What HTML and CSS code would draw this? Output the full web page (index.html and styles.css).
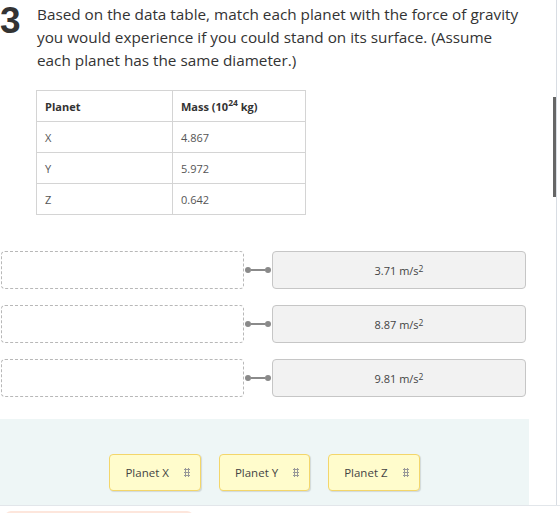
FILE: index.html
```html
<!DOCTYPE html>
<html lang="en">
<head>
    <meta charset="UTF-8">
    <title>Question 3 - Planet gravity</title>
    <link rel="stylesheet" href="styles.css">
</head>
<body>
    <div class="page">
        <div class="question">
            <div class="number">3</div>
            <p class="prompt">Based on the data table, match each planet with the force of gravity you would experience if you could stand on its surface. (Assume each planet has the same diameter.)</p>
        </div>

        <table class="data">
            <tr>
                <th>Planet</th>
                <th>Mass (10<sup>24</sup> kg)</th>
            </tr>
            <tr><td>X</td><td>4.867</td></tr>
            <tr><td>Y</td><td>5.972</td></tr>
            <tr><td>Z</td><td>0.642</td></tr>
        </table>

        <div class="matches">
            <div class="match-row">
                <div class="drop"></div>
                <div class="link"><span class="dot"></span><span class="bar"></span><span class="dot"></span></div>
                <div class="answer">3.71 m/s<sup>2</sup></div>
            </div>
            <div class="match-row">
                <div class="drop"></div>
                <div class="link"><span class="dot"></span><span class="bar"></span><span class="dot"></span></div>
                <div class="answer">8.87 m/s<sup>2</sup></div>
            </div>
            <div class="match-row">
                <div class="drop"></div>
                <div class="link"><span class="dot"></span><span class="bar"></span><span class="dot"></span></div>
                <div class="answer">9.81 m/s<sup>2</sup></div>
            </div>
        </div>

        <div class="bank">
            <div class="chip">Planet X <span class="grip"></span></div>
            <div class="chip">Planet Y <span class="grip"></span></div>
            <div class="chip">Planet Z <span class="grip"></span></div>
        </div>

        <div class="scroll-thumb"></div>
    </div>
    <div class="footer">
        <div class="feedback"></div>
    </div>
</body>
</html>
```

FILE: styles.css
```css
body {
    margin: 0;
    font-family: "Open Sans", sans-serif;
    color: #333;
    background: white;
}
.page {
    position: relative;
    width: 557px;
    height: 505px;
    border-right: 1px solid #d8dde3;
    box-sizing: border-box;
}
.question {
    display: flex;
    padding-top: 3px;
}
.number {
    width: 37px;
    font-family: "Liberation Sans", Arial, sans-serif;
    font-size: 37px;
    font-weight: bold;
    line-height: 41px;
    color: #333;
    margin-top: -3px;
    box-sizing: border-box;
}
.prompt {
    margin: 0;
    width: 492px;
    font-size: 15.3px;
    line-height: 23px;
    color: #333;
}
.data {
    margin: 18px 0 0 36px;
    border-collapse: collapse;
    font-size: 11px;
    color: #555;
}
.data th, .data td {
    border: 1px solid #d4d4d4;
    height: 31px;
    padding: 0 8px;
    text-align: left;
    box-sizing: border-box;
}
.data th {
    font-weight: bold;
    color: #333;
}
.data th:first-child {
    width: 136px;
}
.data th:last-child {
    width: 133px;
}
.data sup {
    font-size: 8.5px;
    line-height: 0;
}
.matches {
    margin-top: 36px;
    padding-left: 1px;
    display: flex;
    flex-direction: column;
    gap: 16px;
}
.match-row {
    display: flex;
    align-items: center;
    height: 38px;
}
.drop {
    width: 243px;
    height: 38px;
    border: 1px dashed #b8b8b8;
    border-radius: 4px;
    box-sizing: border-box;
}
.link {
    display: flex;
    align-items: center;
    width: 28px;
    padding-left: 1px;
    box-sizing: border-box;
}
.dot {
    width: 6px;
    height: 6px;
    border-radius: 50%;
    background: #8a8a8a;
}
.bar {
    width: 14px;
    height: 2px;
    background: #8a8a8a;
}
.answer {
    width: 254px;
    height: 38px;
    display: flex;
    align-items: center;
    justify-content: center;
    background: #f2f2f2;
    border: 1px solid #c6c6c6;
    border-radius: 4px;
    box-sizing: border-box;
    font-size: 11px;
    color: #444;
}
.answer sup {
    font-size: 8.5px;
    line-height: 0;
    position: relative;
    top: -1px;
}
.bank {
    position: absolute;
    left: 0;
    bottom: 0;
    width: 529px;
    height: 86px;
    background: #eef6f6;
    display: flex;
    justify-content: center;
    align-items: flex-end;
    gap: 18px;
    padding-bottom: 14px;
    box-sizing: border-box;
}
.chip {
    display: flex;
    align-items: center;
    height: 37px;
    padding: 0 10px 0 15px;
    gap: 15px;
    background: #fffccc;
    border: 1px solid #f3d66b;
    border-radius: 4px;
    box-shadow: 1px 1px 1px rgba(0,0,0,0.12);
    box-sizing: border-box;
    font-size: 11.5px;
    color: #444;
}
.grip {
    width: 6px;
    height: 9px;
    background: radial-gradient(circle, #999 1px, transparent 1.3px) 0 0 / 3px 3px;
}
.scroll-thumb {
    position: absolute;
    right: 0;
    top: 97px;
    width: 3px;
    height: 100px;
    background: #666;
}
.footer {
    border-top: 1px solid #e2e6ea;
    padding: 5px 0 0 5px;
}
.feedback {
    width: 188px;
    height: 10px;
    background: #fde6dc;
    border-radius: 6px 6px 0 0;
}
```
